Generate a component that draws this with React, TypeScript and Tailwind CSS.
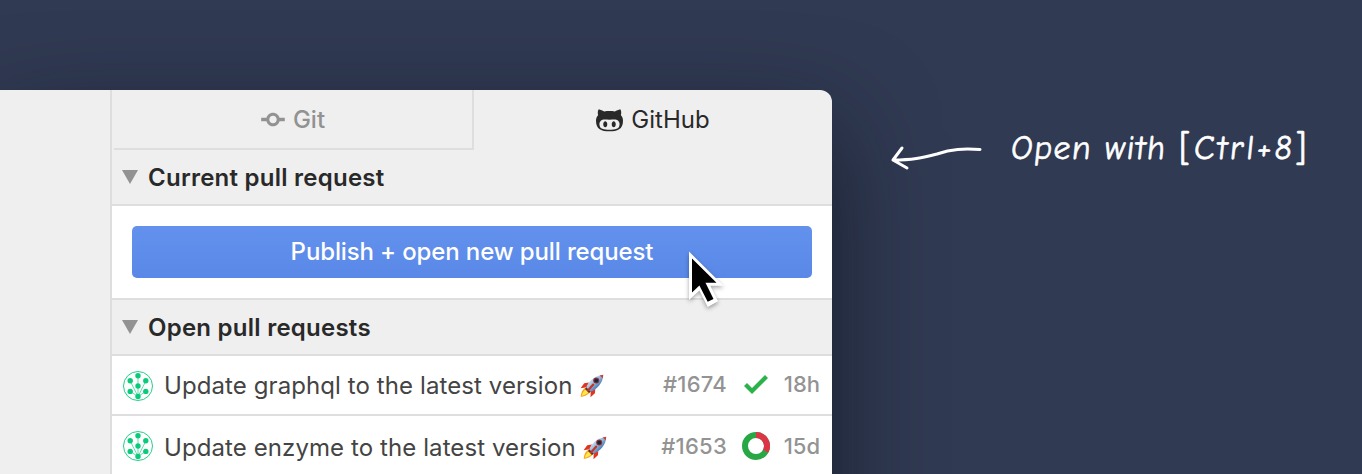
import type { ReactNode } from "react";

function CommitIcon() {
  return (
    <svg className="h-[27px] w-6" viewBox="0 0 14 16" fill="currentColor">
      <path fillRule="evenodd" d="M10.86 7c-.45-1.72-2-3-3.86-3-1.86 0-3.41 1.28-3.86 3H0v2h3.14c.45 1.72 2 3 3.86 3 1.86 0 3.41-1.28 3.86-3H14V7h-3.14zM7 10.2c-1.22 0-2.2-.98-2.2-2.2 0-1.22.98-2.2 2.2-2.2 1.22 0 2.2.98 2.2 2.2 0 1.22-.98 2.2-2.2 2.2z" />
    </svg>
  );
}

function OctofaceIcon() {
  return (
    <svg className="mb-px h-[27px] w-[27px]" viewBox="0 0 16 16" fill="currentColor">
      <path fillRule="evenodd" d="M14.7 5.34c.13-.32.55-1.59-.13-3.31 0 0-1.05-.33-3.44 1.3-1-.28-2.07-.32-3.13-.32s-2.13.04-3.13.32c-2.39-1.64-3.44-1.3-3.44-1.3-.68 1.72-.26 2.99-.13 3.31C.49 6.21 0 7.33 0 8.69 0 13.84 3.33 15 7.98 15S16 13.84 16 8.69c0-1.36-.49-2.48-1.3-3.35zM8 14.02c-3.3 0-5.98-.15-5.98-3.35 0-.76.38-1.48 1.02-2.07 1.07-.98 2.9-.46 4.96-.46 2.07 0 3.88-.52 4.96.46.65.59 1.02 1.3 1.02 2.07 0 3.19-2.68 3.35-5.98 3.35zM5.49 9.01c-.66 0-1.2.8-1.2 1.78s.54 1.79 1.2 1.79c.66 0 1.2-.8 1.2-1.79s-.54-1.78-1.2-1.78zm5.02 0c-.66 0-1.2.79-1.2 1.78s.54 1.79 1.2 1.79c.66 0 1.2-.8 1.2-1.79s-.53-1.78-1.2-1.78z" />
    </svg>
  );
}

function TreeAvatar() {
  const dots = [[15, 4.7], [7.2, 9.8], [22.8, 9.8], [15, 15], [7.2, 20.4], [22.8, 20.4], [15, 25.5]];
  return (
    <svg className="mt-0.5 h-[30px] w-[30px] shrink-0" viewBox="0 0 30 30">
      <circle cx="15" cy="15" r="14.5" fill="#fff" stroke="#0bcb7b" strokeWidth="0.9" />
      <path d="M15 5V25.5M7.2 10L15 25.5L22.8 10M7.2 20.4L15 25.5L22.8 20.4" fill="none" stroke="#0bcb7b" strokeOpacity="0.7" strokeWidth="0.9" />
      {dots.map(([x, y]) => (
        <circle key={`${x}-${y}`} cx={x} cy={y} r="2.7" fill="#0bcb7b" />
      ))}
    </svg>
  );
}

function Rocket() {
  return (
    <svg className="h-6 w-6 shrink-0" viewBox="0 0 24 24" role="img" aria-label="rocket">
      <defs>
        <linearGradient id="hull" x1="0" y1="0" x2="1" y2="1">
          <stop offset="0.2" stopColor="#dcecf5" />
          <stop offset="0.5" stopColor="#8db4d6" />
          <stop offset="0.8" stopColor="#285f9d" />
        </linearGradient>
      </defs>
      <path d="M6.3 13.8C3.5 14 1 18 .7 22.8C4.8 22.5 9.5 20.3 10 17.2Z" fill="#f6a51d" />
      <path d="M6 15.5C4 16.3 2.2 19.3 1.7 21.8C4.6 21.2 7.8 19.8 8.5 17.8Z" fill="#ffe64b" />
      <path d="M9 8.6L4.2 9.3L.6 14.2L6.8 13.2ZM15.3 15L14.9 19.3L10.5 23.3L10.7 17Z" fill="#e5321f" />
      <path d="M6.3 13.3C8 8.5 13.5 1.8 23.2.8C23.3 8.8 16.6 15.7 10.7 17.8Z" fill="url(#hull)" />
      <path d="M19.6 1.5L23.2.8L22.9 4.3Z" fill="#d43d31" />
      <path d="M6.3 13.2L10.8 17.7L9 19L5 15Z" fill="#54313b" />
      <circle cx="16.2" cy="6.6" r="3" fill="#902f38" />
      <circle cx="16.2" cy="6.6" r="1.9" fill="#172838" />
      <path d="M13.2 10.5L8 16.5" stroke="#c93025" strokeWidth="2" strokeLinecap="round" />
    </svg>
  );
}

function CheckIcon() {
  return (
    <svg className="h-8 w-6" viewBox="0 0 12 16" fill="#2cb24a">
      <path d="M12 5l-8 8-4-4 1.5-1.5L4 10l6.5-6.5z" />
    </svg>
  );
}

function StatusRing() {
  return (
    <svg className="h-7 w-7" viewBox="0 0 28 28" fill="none" strokeWidth="6">
      <circle cx="14" cy="14" r="11" stroke="#28a745" />
      <path d="M14 3A11 11 0 0 1 23.6 19.3" stroke="#dc3545" />
    </svg>
  );
}

function SectionHeader({ children }: { children: ReactNode }) {
  return (
    <div className="flex h-14 items-center border-b-2 border-[#dedede] pl-[10px] text-[#292929]">
      <svg className="mr-[10px] h-[14px] w-4" viewBox="0 0 16 14">
        <path d="M0 0H16L8 14Z" fill="#929292" />
      </svg>
      <h2 className="whitespace-nowrap pt-0.5 text-2xl font-semibold tracking-[0.25px]">{children}</h2>
    </div>
  );
}

type PullRequestProps = { title: string; number: string; status: ReactNode; age: string; titleOffset: string; metaOffset: string };

function PullRequest({ title, number, status, age, titleOffset, metaOffset }: PullRequestProps) {
  return (
    <div className="flex h-[60px] shrink-0 items-center border-b-2 border-[#dedede] bg-white pl-[11px] pr-3">
      <TreeAvatar />
      <div className={`ml-[11px] flex items-center gap-[7px] ${titleOffset}`}>
        <span className="whitespace-nowrap text-2xl font-[430] tracking-[0.09px] text-[#444]">{title}</span>
        <Rocket />
      </div>
      <div className={`ml-auto flex items-center text-[22px] font-[450] text-[#939393] ${metaOffset}`}>
        <span className="tracking-[0.25px]">{number}</span>
        <span className="ml-[13px] mr-[11px] flex w-8 items-center justify-center">{status}</span>
        <span className="w-[37px] whitespace-nowrap text-right">{age}</span>
      </div>
    </div>
  );
}

export default function App() {
  return (
    <main className="relative flex h-[474px] w-[1362px] overflow-hidden bg-[#303a52] pt-[90px] font-['Inter',sans-serif]">
      <section className="flex h-[500px] w-[832px] shrink-0 rounded-tr-xl bg-[#efefef] shadow-[0_40px_100px_rgba(10,14,24,0.65)]">
        <div className="w-[110px] shrink-0" />
        <div className="flex w-[722px] flex-col border-l-2 border-[#dedede]">
          <nav className="flex h-[60px] text-2xl">
            <div className="ml-[2px] flex w-[360px] items-center justify-center gap-2 border-b-2 border-r-2 border-[#dedede] pt-px font-[450] text-[#929292]">
              <CommitIcon />
              <span className="pt-px">Git</span>
            </div>
            <div className="flex flex-1 items-center justify-center gap-2 text-[#292929]">
              <OctofaceIcon />
              <span>GitHub</span>
            </div>
          </nav>
          <SectionHeader>Current pull request</SectionHeader>
          <div className="flex h-[94px] border-b-2 border-[#dedede] bg-white p-5">
            <button className="flex-1 rounded-[5px] bg-linear-to-b from-[#6391ed] to-[#5988e8] text-2xl font-medium tracking-[-0.13px] text-white">
              Publish + open new pull request
            </button>
          </div>
          <SectionHeader>Open pull requests</SectionHeader>
          <PullRequest title="Update graphql to the latest version" number="#1674" status={<CheckIcon />} age="18h" titleOffset="pt-0.5" metaOffset="pb-0.5" />
          <PullRequest title="Update enzyme to the latest version" number="#1653" status={<StatusRing />} age="15d" titleOffset="pt-[5px]" metaOffset="pt-0.5" />
        </div>
      </section>
      <aside className="flex h-[100px] items-center pl-[58px] pt-4 text-white">
        <svg className="mt-3 h-14 w-[94px]" viewBox="0 0 94 56" fill="none" stroke="#fff" strokeWidth="3" strokeLinecap="round" strokeLinejoin="round">
          <path d="M90 23.5C73 22.5 62 23 47 28C32 32 22 34 3 34M12 22L3 34L17 42" />
        </svg>
        <p className="ml-[27px] flex whitespace-pre font-['Comic_Neue','Segoe_Print',cursive] text-[34px] font-medium [-webkit-text-stroke:0.6px_white]">
          <span className="w-[168px] -skew-x-6 tracking-[1.4px]">Open with </span>
          <span className="flex items-center tracking-[2.8px]">
            <span className="text-[37px] leading-none">[</span>
            <span className="-skew-x-6">Ctrl+8</span>
            <span className="text-[37px] leading-none">]</span>
          </span>
        </p>
      </aside>
      <svg className="absolute left-[685px] top-[248px] h-[64px] w-[44px] drop-shadow-[0_2px_2px_rgba(0,0,0,0.35)]" viewBox="0 0 44 64">
        <path d="M4 3.5V52L14.4 42.5L22.7 58.9L33 53.3L25.3 37.8H38.5Z" fill="#fff" />
        <path d="M7 10.5V44.5L14.4 37.4L22.7 53.8L28.5 51L20.5 34.8H31.5Z" fill="#000" />
      </svg>
    </main>
  );
}
